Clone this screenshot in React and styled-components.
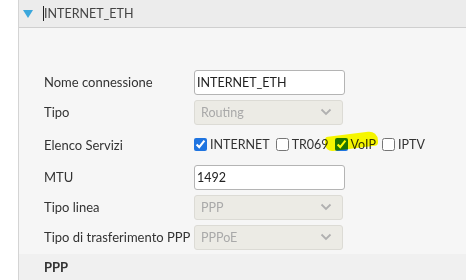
import React from "react";
import styled, { createGlobalStyle } from "styled-components";

const GlobalStyle = createGlobalStyle`
  html, body {
    margin: 0;
    padding: 0;
    background: #ffffff;
    font-family: "Lato", "Noto Sans", sans-serif;
  }
`;

const Page = styled.div`
  width: 466px;
  height: 280px;
  display: flex;
  overflow: hidden;
  background: #ffffff;
`;

const Gutter = styled.div`
  width: 18px;
  flex-shrink: 0;
  background: #ffffff;
  border-right: 1px solid #d4d4d4;
`;

const Panel = styled.div`
  flex: 1;
  display: flex;
  flex-direction: column;
  background: #f6f6f6;
`;

const Header = styled.div`
  height: 28px;
  display: flex;
  align-items: center;
  gap: 10px;
  padding-left: 4px;
  background: #ececec;
  border-bottom: 1px solid #cfcfcf;
  font-size: 12.5px;
  color: #444;
`;

const Caret = styled.span`
  width: 0;
  height: 0;
  border-left: 5px solid transparent;
  border-right: 5px solid transparent;
  border-top: 8px solid #3ba7dc;
  margin-top: 1px;
`;

const Title = styled.span`
  border-left: 1px solid #222;
  line-height: 15px;
`;

const Form = styled.div`
  display: flex;
  flex-direction: column;
  gap: 5px;
  padding: 42px 0 4px 25px;
`;

const Row = styled.div`
  display: flex;
  align-items: center;
  height: ${(p) => (p.tall ? "30px" : "25px")};
`;

const Label = styled.div`
  width: 150px;
  font-size: 13px;
  color: #333;
  white-space: nowrap;
`;

const TextInput = styled.div`
  width: 147px;
  height: 23px;
  border: 1px solid #b4b4b4;
  border-radius: 3px;
  background: #ffffff;
  font-size: 12.5px;
  color: #222;
  display: flex;
  align-items: center;
  padding-left: 2px;
`;

const Select = styled.div`
  width: 131px;
  height: 23px;
  border: 1px solid #dcdbd5;
  border-radius: 3px;
  background: #ecebe5;
  font-size: 12.5px;
  color: #a9a9a9;
  display: flex;
  align-items: center;
  justify-content: space-between;
  padding: 0 10px 0 6px;
`;

const Services = styled.div`
  display: flex;
  align-items: center;
  font-size: 12.5px;
  color: #333;
  position: relative;
`;

const Check = styled.label`
  display: flex;
  align-items: center;
  margin-right: 6px;
  input {
    margin: 0 3px 0 0;
    width: 13px;
    height: 13px;
    accent-color: #1f74e0;
  }
`;

const Highlight = styled.span`
  position: absolute;
  left: 131px;
  top: 0;
  width: 53px;
  height: 15px;
  background: #ffff00;
  mix-blend-mode: multiply;
  border-radius: 3px 10px 3px 8px;
  transform: skewY(-7deg);
  transform-origin: left bottom;
`;

const Section = styled.div`
  margin-top: auto;
  height: 28px;
  display: flex;
  align-items: center;
  padding-left: 25px;
  background: #f0f0f0;
  font-size: 13px;
  font-weight: 700;
  color: #333;
`;

const Chevron = () => (
  <svg width="12" height="8" viewBox="0 0 12 8">
    <path d="M1.5 1.5 L6 6 L10.5 1.5" fill="none" stroke="#b0b0b0" strokeWidth="1.8" />
  </svg>
);

const fields = [
  { label: "Nome connessione", kind: "input", value: "INTERNET_ETH" },
  { label: "Tipo", kind: "select", value: "Routing" },
  { label: "Elenco Servizi", kind: "services" },
  { label: "MTU", kind: "input", value: "1492" },
  { label: "Tipo linea", kind: "select", value: "PPP" },
  { label: "Tipo di trasferimento PPP", kind: "select", value: "PPPoE" },
];

const services = [
  { name: "INTERNET", checked: true },
  { name: "TR069", checked: false },
  { name: "VoIP", checked: true },
  { name: "IPTV", checked: false },
];

export default function App() {
  return (
    <Page>
      <GlobalStyle />
      <Gutter />
      <Panel>
        <Header>
          <Caret />
          <Title>INTERNET_ETH</Title>
        </Header>
        <Form>
          {fields.map((f) => (
            <Row key={f.label} tall={f.kind === "services"}>
              <Label>{f.label}</Label>
              {f.kind === "input" && <TextInput>{f.value}</TextInput>}
              {f.kind === "select" && (
                <Select>
                  {f.value}
                  <Chevron />
                </Select>
              )}
              {f.kind === "services" && (
                <Services>
                  {services.map((s) => (
                    <Check key={s.name}>
                      <input type="checkbox" defaultChecked={s.checked} />
                      {s.name}
                    </Check>
                  ))}
                  <Highlight />
                </Services>
              )}
            </Row>
          ))}
        </Form>
        <Section>PPP</Section>
      </Panel>
    </Page>
  );
}
